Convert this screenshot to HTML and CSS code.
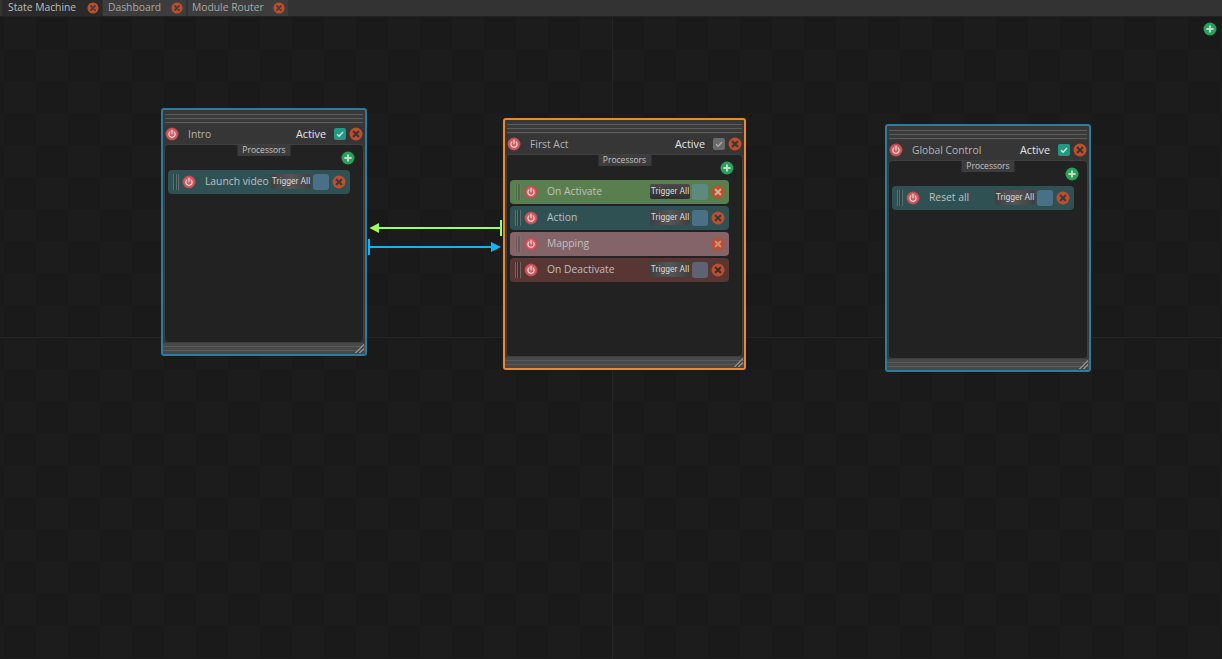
FILE: index.html
```html
<!DOCTYPE html>
<html>
<head>
	<meta charset="utf-8">
	<title>State Machine</title>
	<link rel="stylesheet" href="styles.css">
</head>
<body>
	<svg class="defs" width="0" height="0">
		<symbol id="power" viewBox="0 0 14 14">
			<circle cx="7" cy="7" r="6.500" fill="#bb4a50"/>
			<circle cx="7" cy="7" r="5.500" fill="#cf5a60"/>
			<path d="M4.900 4.900a3.100 3.100 0 1 0 4.200 0" fill="none" stroke="#efdcdc" stroke-width="1.200" stroke-linecap="round"/>
			<path d="M7 3.200v3.600" fill="none" stroke="#efdcdc" stroke-width="1.200" stroke-linecap="round"/>
		</symbol>
		<symbol id="close" viewBox="0 0 14 14">
			<circle cx="7" cy="7" r="6.500" fill="#bf4e2c"/>
			<path class="close-x" d="M4.700 4.700l4.600 4.600M9.300 4.700l-4.600 4.600" fill="none" stroke-width="2.200" stroke-linecap="round"/>
		</symbol>
		<symbol id="add" viewBox="0 0 14 14">
			<circle cx="7" cy="7" r="6.500" fill="#26a25a"/>
			<path d="M7 3.400v7.200M3.400 7h7.200" fill="none" stroke="#c6d8cc" stroke-width="2"/>
		</symbol>
		<symbol id="check" viewBox="0 0 12 12">
			<path d="M3 6.200l2.100 2.100L9 4" fill="none" stroke="currentColor" stroke-width="1.400"/>
		</symbol>
	</svg>

	<div class="tabs">
		<div class="tab active"><span>State Machine</span> <svg class="ico-tab"><use href="#close"/></svg></div>
		<div class="tab"><span>Dashboard</span> <svg class="ico-tab"><use href="#close"/></svg></div>
		<div class="tab"><span>Module Router</span> <svg class="ico-tab"><use href="#close"/></svg></div>
	</div>

	<div class="canvas">
		<div class="axis-v"></div>
		<div class="axis-h"></div>
		<svg class="ico-add canvas-add"><use href="#add"/></svg>

		<!-- transitions -->
		<svg class="links" width="1222" height="642">
			<g fill="#9dff5c" stroke="#9dff5c">
				<path d="M378 211H501" stroke-width="2" fill="none"/>
				<path d="M501 203v16" stroke-width="2" fill="none"/>
				<path d="M369.500 211l9.500-5v10z" stroke="none"/>
			</g>
			<g fill="#14b4f0" stroke="#14b4f0">
				<path d="M369 230H492" stroke-width="2" fill="none"/>
				<path d="M369 222v16" stroke-width="2" fill="none"/>
				<path d="M501 230l-10-5v10z" stroke="none"/>
			</g>
		</svg>

		<div class="node node-intro">
			<div class="grip"></div>
			<div class="node-head">
				<svg class="ico"><use href="#power"/></svg>
				<span class="node-name">Intro</span>
				<span class="node-active">Active</span>
				<span class="toggle on"><svg><use href="#check"/></svg></span>
				<svg class="ico"><use href="#close"/></svg>
			</div>
			<div class="panel">
				<div class="panel-label">Processors</div>
				<div class="panel-tools"><svg class="ico-add"><use href="#add"/></svg></div>
				<div class="item teal">
					<span class="item-grip"></span>
					<svg class="ico"><use href="#power"/></svg>
					<span class="item-name">Launch video</span>
					<span class="trigger">Trigger All</span>
					<span class="swatch"></span>
					<svg class="ico"><use href="#close"/></svg>
				</div>
			</div>
			<div class="grip bottom"></div>
			<div class="corner"></div>
		</div>

		<div class="node node-act">
			<div class="grip"></div>
			<div class="node-head">
				<svg class="ico"><use href="#power"/></svg>
				<span class="node-name">First Act</span>
				<span class="node-active">Active</span>
				<span class="toggle"><svg><use href="#check"/></svg></span>
				<svg class="ico"><use href="#close"/></svg>
			</div>
			<div class="panel">
				<div class="panel-label">Processors</div>
				<div class="panel-tools"><svg class="ico-add"><use href="#add"/></svg></div>
				<div class="item green">
					<span class="item-grip"></span>
					<svg class="ico"><use href="#power"/></svg>
					<span class="item-name">On Activate</span>
					<span class="trigger dark">Trigger All</span>
					<span class="swatch s-green"></span>
					<svg class="ico"><use href="#close"/></svg>
				</div>
				<div class="item teal">
					<span class="item-grip"></span>
					<svg class="ico"><use href="#power"/></svg>
					<span class="item-name">Action</span>
					<span class="trigger">Trigger All</span>
					<span class="swatch"></span>
					<svg class="ico"><use href="#close"/></svg>
				</div>
				<div class="item pink">
					<span class="item-grip"></span>
					<svg class="ico"><use href="#power"/></svg>
					<span class="item-name">Mapping</span>
					<svg class="ico"><use href="#close"/></svg>
				</div>
				<div class="item brown">
					<span class="item-grip"></span>
					<svg class="ico"><use href="#power"/></svg>
					<span class="item-name">On Deactivate</span>
					<span class="trigger">Trigger All</span>
					<span class="swatch s-grey"></span>
					<svg class="ico"><use href="#close"/></svg>
				</div>
			</div>
			<div class="grip bottom"></div>
			<div class="corner"></div>
		</div>

		<div class="node node-global">
			<div class="grip"></div>
			<div class="node-head">
				<svg class="ico"><use href="#power"/></svg>
				<span class="node-name">Global Control</span>
				<span class="node-active">Active</span>
				<span class="toggle on"><svg><use href="#check"/></svg></span>
				<svg class="ico"><use href="#close"/></svg>
			</div>
			<div class="panel">
				<div class="panel-label">Processors</div>
				<div class="panel-tools"><svg class="ico-add"><use href="#add"/></svg></div>
				<div class="item teal">
					<span class="item-grip"></span>
					<svg class="ico"><use href="#power"/></svg>
					<span class="item-name">Reset all</span>
					<span class="trigger">Trigger All</span>
					<span class="swatch"></span>
					<svg class="ico"><use href="#close"/></svg>
				</div>
			</div>
			<div class="grip bottom"></div>
			<div class="corner"></div>
		</div>
	</div>
</body>
</html>
```

FILE: styles.css
```css
* {
	margin: 0;
	padding: 0;
	box-sizing: border-box;
}

html, body {
	height: 100%;
	overflow: hidden;
}

body {
	display: flex;
	flex-direction: column;
	background: #1b1b1b;
	font-family: "Open Sans", sans-serif;
	font-size: 10.3px;
	color: #b4b4b4;
}

.defs {
	position: absolute;
}

.close-x {
	stroke: var(--x, #3b3634);
}

/* tabs */
.tabs {
	display: flex;
	flex: none;
	height: 17px;
	padding-left: 2px;
	background: #333;
	border-bottom: 1px solid #222;
}

.tab {
	display: flex;
	align-items: center;
	justify-content: space-between;
	height: 16px;
	padding: 0 3px 0 5px;
	background: #3d3d3d;
	color: #a8a8a8;
	--x: #4a3d39;
}

.tab span {
	margin-bottom: 2px;
}

.tab:nth-child(1) { width: 100px; padding-left: 6px; }
.tab:nth-child(2) { width: 83px; margin-left: 1px; }
.tab:nth-child(3) { width: 100px; margin-left: 2px; padding-left: 4px; }

.tab.active {
	background: #2a2a2a;
	color: #bebebe;
}

.ico-tab {
	width: 12px;
	height: 12px;
}

/* canvas */
.canvas {
	position: relative;
	flex: 1;
	background-color: #1a1a1a;
	background-image: repeating-conic-gradient(#1c1c1c 0 25%, #1a1a1a 0 50%);
	background-size: 64px 64px;
	background-position: 36px 0;
}

.axis-v, .axis-h {
	position: absolute;
	background: #252525;
}

.axis-v {
	left: 612px;
	top: 0;
	bottom: 0;
	width: 1px;
}

.axis-h {
	left: 0;
	right: 0;
	top: 320px;
	height: 1px;
}

.canvas-add {
	position: absolute;
	left: 1203px;
	top: 5px;
}

.links {
	position: absolute;
	left: 0;
	top: 0;
}

/* nodes */
.node {
	position: absolute;
	display: flex;
	flex-direction: column;
	background: #383838;
	border: 2px solid #2b7c9e;
	border-radius: 3px;
}

.node-intro { left: 161px; top: 91px; width: 206px; height: 248px; }
.node-act { left: 503px; top: 101px; width: 243px; height: 252px; border-color: #ec8a2e; }
.node-global { left: 885px; top: 107px; width: 206px; height: 248px; }

.grip {
	flex: none;
	height: 14px;
	margin: 0 2px;
	padding-top: 4px;
	background: repeating-linear-gradient(#5c5c5c 0 1px, #3a3a3a 1px 4px) content-box;
}

.grip.bottom {
	height: 11px;
	margin: 0;
	padding: 0;
	background: repeating-linear-gradient(#484848 0 3px, #5a5a5a 3px 4px);
}

.node-head {
	display: flex;
	align-items: center;
	flex: none;
	height: 20px;
	padding: 0 2px;
	background: #363636;
}

.ico {
	flex: none;
	width: 14px;
	height: 14px;
}

.node-name {
	flex: 1;
	margin-left: 9px;
	margin-bottom: 1px;
}

.node-active {
	margin-right: 8px;
	margin-bottom: 2px;
	font-size: 10.8px;
	color: #e4e4e4;
}

.toggle {
	width: 12px;
	height: 12px;
	margin-right: 3px;
	border-radius: 2px;
	background: #6a6a6a;
	color: #a8a8a8;
}

.toggle.on {
	background: #1f9a83;
	color: #d6e8e2;
}

.toggle svg {
	display: block;
	width: 12px;
	height: 12px;
}

/* processors panel */
.panel {
	position: relative;
	flex: 1;
	margin: 0 1px;
	padding: 6px 3px 0;
	background: #222;
	border: 1px solid #3f3f3f;
	border-radius: 4px;
}

.panel-label {
	position: absolute;
	left: 50%;
	top: 0;
	transform: translateX(-50%);
	width: 53px;
	height: 11px;
	line-height: 10px;
	background: #3c3c3c;
	text-align: center;
	font-size: 8.5px;
	color: #c4c4c4;
}

.panel-tools {
	display: flex;
	justify-content: flex-end;
	height: 18px;
	padding-right: 5px;
}

.ico-add {
	flex: none;
	width: 14px;
	height: 14px;
}

.item {
	display: flex;
	align-items: center;
	width: calc(100% - 10px);
	height: 24px;
	margin-top: 2px;
	padding: 0 4px;
	border-radius: 4px;
}

.panel-tools + .item {
	margin-top: 1px;
}

.item.teal { background: #2f5154; --x: #373d3e; }
.item.green { background: #5a7f4e; --x: #c9b49a; }
.item.pink { background: #846468; --x: #c8907f; }
.item.brown { background: #573633; --x: #3a3030; }

.item-grip {
	flex: none;
	width: 6px;
	height: 16px;
	margin-left: 1px;
	background: repeating-linear-gradient(90deg, rgba(120, 120, 120, 0.7) 0 1px, rgba(0, 0, 0, 0.15) 1px 2.5px);
}

.item .ico:first-of-type {
	margin-left: 3px;
}

.item-name {
	flex: 1;
	margin-left: 9px;
	margin-bottom: 2px;
	color: #c0c0c0;
	white-space: nowrap;
}

.trigger {
	flex: none;
	width: 40px;
	height: 15px;
	margin-bottom: 2px;
	line-height: 14px;
	border-radius: 2px;
	background: linear-gradient(90deg, #3f3f3f, #555 50%, #3f3f3f);
	text-align: center;
	font-family: Roboto, sans-serif;
	font-size: 8.5px;
	color: #d8d8d8;
	white-space: nowrap;
}

.trigger.dark {
	background: linear-gradient(#4a4a4a, #2f2f2f);
}

.swatch {
	flex: none;
	width: 16px;
	height: 16px;
	margin: 0 3px 0 2px;
	border-radius: 3px;
	background: #4a7085;
}

.swatch.s-green { background: #5d8a80; }
.swatch.s-grey { background: #5e6273; }

.corner {
	position: absolute;
	right: 1px;
	bottom: 1px;
	width: 11px;
	height: 11px;
	background: repeating-linear-gradient(135deg, #888 0 1px, transparent 1px 3px);
	clip-path: polygon(100% 0, 100% 100%, 0 100%);
}
```
